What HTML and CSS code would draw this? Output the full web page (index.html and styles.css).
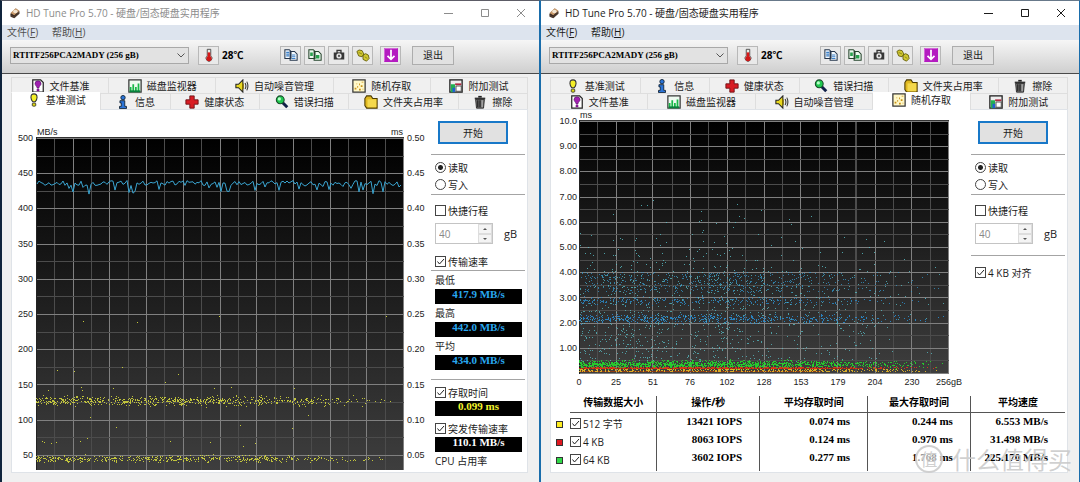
FILE: index.html
```html
<!DOCTYPE html>
<html lang="zh-CN">
<head>
<meta charset="utf-8">
<title>HD Tune Pro 5.70</title>
<link rel="stylesheet" href="styles.css">
</head>
<body>
<svg class="sprite" aria-hidden="true">
  <symbol id="i-disk" viewBox="0 0 16 16"><path d="M2 9 9 2l5 4-6 8-6-3z" fill="#3a2a20"/><path d="M2 8 9 1.500l5 3.500-7 6z" fill="#c99a6b"/><ellipse cx="8.500" cy="6" rx="3" ry="2.300" fill="#f3e4d0"/><path d="m2 10 5 2.500L14 6v3l-7 6-5-2z" fill="#4a372c"/></symbol>
  <symbol id="i-file" viewBox="0 0 16 16"><path d="M2 1h9l3 3v11H2z" fill="#fff" stroke="#222" stroke-width="1.400"/><path d="M4.500 5.500q0-3.500 3.500-3.500t3.500 3.500c0 2-2 2-2.500 5H7C7 8.500 5 8 4.500 5.500z" fill="#a020b0" stroke="#401050" stroke-width=".6"/><rect x="6.500" y="11.500" width="3" height="2.500" fill="#801090"/></symbol>
  <symbol id="i-monitor" viewBox="0 0 16 16"><rect x="1" y="1" width="14" height="14" fill="#eefaf0" stroke="#333" stroke-width="1.400"/><path d="M2 15V9h2v6zM5 15V6h2v9zM8 15V9h2v6zM11 15V5h2v10z" fill="#18b848"/><path d="M2 14h12" stroke="#08803c" stroke-width="2"/></symbol>
  <symbol id="i-sound" viewBox="0 0 16 16"><path d="M1 6h3l5-5v14l-5-5H1z" fill="#e8d820" stroke="#222" stroke-width="1.200"/><path d="M9 5v6" stroke="#806c00" stroke-width="2"/><path d="M11.500 4.500q2 3.500 0 7M13.500 3q2.500 5 0 10" fill="none" stroke="#333" stroke-width="1.200"/></symbol>
  <symbol id="i-random" viewBox="0 0 16 16"><rect x="1" y="1" width="14" height="14" fill="#fff8c8" stroke="#333" stroke-width="1.400"/><path d="M3 12h2v-2H3zM6 10h1V8H6zM5 6h1V5H5zM8 7h1V5H8zM10 9h2V7h-2zM11 4h2V3h-2zM8 13h2v-2H8zM12 12h1v-1h-1z" fill="#c89018"/></symbol>
  <symbol id="i-extra" viewBox="0 0 16 16"><rect x="1" y="1" width="14" height="14" fill="#eee" stroke="#222" stroke-width="1.500"/><path d="M2 6h5v9H2z" fill="#20b050"/><path d="M4 10h3v5H4z" fill="#2060d0"/><path d="M7 5h7v2H7z" fill="#b02840"/><path d="M8 8h6v6H8z" fill="#fff" stroke="#444"/></symbol>
  <symbol id="i-bench" viewBox="0 0 16 16"><path d="M4.500 5q0-4 3.500-4t3.500 4q0 2-2 5h-3q-2-3-2-5z" fill="#f4ee28" stroke="#333" stroke-width="1.200"/><rect x="6" y="11.500" width="4" height="3.500" rx="1" fill="#e0d810" stroke="#333"/></symbol>
  <symbol id="i-info" viewBox="0 0 16 16"><circle cx="8" cy="3" r="2.500" fill="#2a74d8" stroke="#123"/><path d="M4.500 6.500H10V13h2v2.500H4V13h2V9H4.500z" fill="#2a74d8" stroke="#123"/></symbol>
  <symbol id="i-health" viewBox="0 0 16 16"><path d="M5.500 1h5v4.500H15v5h-4.500V15h-5v-4.500H1v-5h4.500z" fill="#d81c24" stroke="#6a1014"/></symbol>
  <symbol id="i-scan" viewBox="0 0 16 16"><path d="m8 8 6 6" stroke="#102048" stroke-width="3.500"/><circle cx="6" cy="5.500" r="4.500" fill="#20c850" stroke="#174a28" stroke-width="1.200"/><circle cx="5" cy="4.500" r="1.800" fill="#b8ffc8"/></symbol>
  <symbol id="i-folder" viewBox="0 0 16 16"><path d="M1 4 3 1h5l2 3h5v11H3L1 12z" fill="#e0b820" stroke="#4a3a00" stroke-width="1.200"/><path d="M4 5h10v9H4z" fill="#f4d84c"/></symbol>
  <symbol id="i-erase" viewBox="0 0 16 16"><path d="M6 1h4v2H6z" fill="#222"/><path d="M2 3h12v2H2z" fill="#333"/><path d="M3 5h10l-1 10H4z" fill="#777" stroke="#222"/><path d="M5.500 6v8M8 6v8" stroke="#222" stroke-width="1.500"/><path d="M10.500 6v8" stroke="#bbb"/></symbol>
  <symbol id="i-temp" viewBox="0 0 16 16"><path d="M6 1.500h4V9a3.400 3.400 0 1 1-4 0z" fill="#e8ece8" stroke="#444"/><path d="M6.500 5h3v5h-3z" fill="#d81818"/><circle cx="8" cy="12" r="3" fill="#d01818"/></symbol>
  <symbol id="i-copy" viewBox="0 0 16 16"><path d="M1 2h5l2 2v8H1zM7 4h5l3 3v7H7z" fill="#f4faff" stroke="#26364c" stroke-width="1.200"/><path d="M2.500 5H6M2.500 7H6M2.500 9H6M9 8h4M9 10h4M9 12h4" stroke="#3c80c8" stroke-width="1.200"/></symbol>
  <symbol id="i-copypic" viewBox="0 0 16 16"><path d="M1 2h5l2 2v8H1zM7 4h5l3 3v7H7z" fill="#effaf0" stroke="#24442c" stroke-width="1.200"/><path d="M2.500 5h3v4h-3zM9 8h4v4H9z" fill="#28a04c"/></symbol>
  <symbol id="i-camera" viewBox="0 0 16 16"><path d="M5 2h6v3h3v8H2V5h3z" fill="#363636"/><path d="M6.500 3.500h3V5h-3z" fill="#ddd"/><circle cx="8" cy="9" r="3" fill="#e4e4e4"/><circle cx="8" cy="9" r="1.300" fill="#555"/></symbol>
  <symbol id="i-save" viewBox="0 0 16 16"><path d="M1 4q2-3 6-1l2 4-2 3-4-1zM8 8q3-3 6 0l1 4-3 3-4-2z" fill="#d0c830" stroke="#625c10"/><path d="m3 5 4 2m3 3 3 2" stroke="#8a8218"/></symbol>
  <symbol id="i-down" viewBox="0 0 16 16"><rect width="16" height="16" fill="#b41cc0"/><path d="M.5 15.500V.5h15" fill="none" stroke="#d878dc"/><path d="M8 2v11M4 9l4 4 4-4" fill="none" stroke="#fff" stroke-width="2"/></symbol>
  <symbol id="i-min" viewBox="0 0 10 10"><path d="M0 5.500h9" stroke="currentColor"/></symbol>
  <symbol id="i-max" viewBox="0 0 10 10"><path d="M1.500 1.500h7v7h-7z" fill="none" stroke="currentColor"/></symbol>
  <symbol id="i-close" viewBox="0 0 10 10"><path d="m1 1 8 8M9 1 1 9" fill="none" stroke="currentColor"/></symbol>
</svg>

<main class="desktop">
  <section class="window inactive">
    <header class="titlebar">
      <svg class="icon"><use href="#i-disk"/></svg>
      <h1 class="title">HD Tune Pro 5.70 - 硬盘/固态硬盘实用程序</h1>
      <button class="ctl" aria-label="最小化"><svg><use href="#i-min"/></svg></button>
      <button class="ctl" aria-label="最大化"><svg><use href="#i-max"/></svg></button>
      <button class="ctl" aria-label="关闭"><svg><use href="#i-close"/></svg></button>
    </header>
    <nav class="menubar"><button>文件(<u>F</u>)</button><button>帮助(<u>H</u>)</button></nav>
    <div class="toolbar">
      <select class="drive" aria-label="硬盘"><option>RTITF256PCA2MADY (256 gB)</option></select>
      <button class="tool" aria-label="温度"><svg class="icon"><use href="#i-temp"/></svg></button>
      <span class="temp">28℃</span>
      <div class="tools">
        <button class="tool" aria-label="复制文本"><svg class="icon"><use href="#i-copy"/></svg></button>
        <button class="tool" aria-label="复制图像"><svg class="icon"><use href="#i-copypic"/></svg></button>
        <button class="tool" aria-label="截图"><svg class="icon"><use href="#i-camera"/></svg></button>
        <button class="tool" aria-label="选项"><svg class="icon"><use href="#i-save"/></svg></button>
        <button class="tool last" aria-label="保存"><svg class="icon"><use href="#i-down"/></svg></button>
        <button class="exit">退出</button>
      </div>
    </div>
    <div class="client">
      <div class="tabs">
        <div class="tabrow">
          <button class="tab"><svg class="icon"><use href="#i-file"/></svg>文件基准</button>
          <button class="tab"><svg class="icon"><use href="#i-monitor"/></svg>磁盘监视器</button>
          <button class="tab"><svg class="icon"><use href="#i-sound"/></svg>自动噪音管理</button>
          <button class="tab"><svg class="icon"><use href="#i-random"/></svg>随机存取</button>
          <button class="tab"><svg class="icon"><use href="#i-extra"/></svg>附加测试</button>
        </div>
        <div class="tabrow">
          <button class="tab active"><svg class="icon"><use href="#i-bench"/></svg>基准测试</button>
          <button class="tab"><svg class="icon"><use href="#i-info"/></svg>信息</button>
          <button class="tab"><svg class="icon"><use href="#i-health"/></svg>健康状态</button>
          <button class="tab"><svg class="icon"><use href="#i-scan"/></svg>错误扫描</button>
          <button class="tab"><svg class="icon"><use href="#i-folder"/></svg>文件夹占用率</button>
          <button class="tab"><svg class="icon"><use href="#i-erase"/></svg>擦除</button>
        </div>
      </div>
      <div class="page">
        <div class="bench">
          <div class="units"><span>MB/s</span><span>ms</span></div>
          <div class="axis left"><span>500</span><span>450</span><span>400</span><span>350</span><span>300</span><span>250</span><span>200</span><span>150</span><span>100</span><span>50</span></div>
          <svg class="plot" id="bench-plot" viewBox="0 0 368 333" preserveAspectRatio="none" role="img" aria-label="传输速率"></svg>
          <div class="axis right"><span>0.50</span><span>0.45</span><span>0.40</span><span>0.35</span><span>0.30</span><span>0.25</span><span>0.20</span><span>0.15</span><span>0.10</span><span>0.05</span></div>
        </div>
        <aside class="panel">
          <button class="start">开始</button>
          <div class="group radios">
            <label class="row"><input type="radio" name="mode-a" checked>读取</label>
            <label class="row"><input type="radio" name="mode-a">写入</label>
          </div>
          <div class="group stroke">
            <label class="row"><input type="checkbox">快捷行程</label>
            <div class="spinrow"><div class="spin"><input type="text" value="40" aria-label="行程" disabled><button class="up" aria-label="增加" disabled></button><button class="down" aria-label="减少" disabled></button></div>gB</div>
            <label class="row rate"><input type="checkbox" checked>传输速率</label>
          </div>
          <div class="group speeds">
            <div class="cap">最低</div><output class="led blue">417.9 MB/s</output>
            <div class="cap">最高</div><output class="led blue">442.0 MB/s</output>
            <div class="cap">平均</div><output class="led blue">434.0 MB/s</output>
          </div>
          <div class="group access">
            <label class="row"><input type="checkbox" checked>存取时间</label><output class="led yellow">0.099 ms</output>
            <label class="row"><input type="checkbox" checked>突发传输速率</label><output class="led white">110.1 MB/s</output>
            <div class="cap">CPU 占用率</div>
          </div>
        </aside>
      </div>
    </div>
  </section>

  <section class="window">
    <header class="titlebar">
      <svg class="icon"><use href="#i-disk"/></svg>
      <h1 class="title">HD Tune Pro 5.70 - 硬盘/固态硬盘实用程序</h1>
      <button class="ctl" aria-label="最小化"><svg><use href="#i-min"/></svg></button>
      <button class="ctl" aria-label="最大化"><svg><use href="#i-max"/></svg></button>
      <button class="ctl" aria-label="关闭"><svg><use href="#i-close"/></svg></button>
    </header>
    <nav class="menubar"><button>文件(<u>F</u>)</button><button>帮助(<u>H</u>)</button></nav>
    <div class="toolbar">
      <select class="drive" aria-label="硬盘"><option>RTITF256PCA2MADY (256 gB)</option></select>
      <button class="tool" aria-label="温度"><svg class="icon"><use href="#i-temp"/></svg></button>
      <span class="temp">28℃</span>
      <div class="tools">
        <button class="tool" aria-label="复制文本"><svg class="icon"><use href="#i-copy"/></svg></button>
        <button class="tool" aria-label="复制图像"><svg class="icon"><use href="#i-copypic"/></svg></button>
        <button class="tool" aria-label="截图"><svg class="icon"><use href="#i-camera"/></svg></button>
        <button class="tool" aria-label="选项"><svg class="icon"><use href="#i-save"/></svg></button>
        <button class="tool last" aria-label="保存"><svg class="icon"><use href="#i-down"/></svg></button>
        <button class="exit">退出</button>
      </div>
    </div>
    <div class="client">
      <div class="tabs">
        <div class="tabrow">
          <button class="tab"><svg class="icon"><use href="#i-bench"/></svg>基准测试</button>
          <button class="tab"><svg class="icon"><use href="#i-info"/></svg>信息</button>
          <button class="tab"><svg class="icon"><use href="#i-health"/></svg>健康状态</button>
          <button class="tab"><svg class="icon"><use href="#i-scan"/></svg>错误扫描</button>
          <button class="tab"><svg class="icon"><use href="#i-folder"/></svg>文件夹占用率</button>
          <button class="tab"><svg class="icon"><use href="#i-erase"/></svg>擦除</button>
        </div>
        <div class="tabrow">
          <button class="tab"><svg class="icon"><use href="#i-file"/></svg>文件基准</button>
          <button class="tab"><svg class="icon"><use href="#i-monitor"/></svg>磁盘监视器</button>
          <button class="tab"><svg class="icon"><use href="#i-sound"/></svg>自动噪音管理</button>
          <button class="tab active"><svg class="icon"><use href="#i-random"/></svg>随机存取</button>
          <button class="tab"><svg class="icon"><use href="#i-extra"/></svg>附加测试</button>
        </div>
      </div>
      <div class="page stacked">
        <div class="upper">
          <div class="random">
            <div class="units"><span>ms</span></div>
            <div class="axis left"><span>10.0</span><span>9.00</span><span>8.00</span><span>7.00</span><span>6.00</span><span>5.00</span><span>4.00</span><span>3.00</span><span>2.00</span><span>1.00</span></div>
            <svg class="plot" id="random-plot" viewBox="0 0 368 254" preserveAspectRatio="none" role="img" aria-label="随机存取时间"></svg>
            <div class="xaxis"><span>0</span><span>25</span><span>51</span><span>76</span><span>102</span><span>128</span><span>153</span><span>179</span><span>204</span><span>230</span><span>256gB</span></div>
          </div>
          <aside class="panel">
            <button class="start">开始</button>
            <div class="group radios">
              <label class="row"><input type="radio" name="mode-b" checked>读取</label>
              <label class="row"><input type="radio" name="mode-b">写入</label>
            </div>
            <div class="group stroke">
              <label class="row"><input type="checkbox">快捷行程</label>
              <div class="spinrow"><div class="spin"><input type="text" value="40" aria-label="行程" disabled><button class="up" aria-label="增加" disabled></button><button class="down" aria-label="减少" disabled></button></div>gB</div>
            </div>
            <div class="group align"><label class="row"><input type="checkbox" checked>4 KB 对齐</label></div>
          </aside>
        </div>
        <table class="results">
          <colgroup><col class="c-key"><col class="c-size"><col class="c-ops"><col class="c-avg"><col class="c-max"><col class="c-speed"></colgroup>
          <thead><tr><td></td><th>传输数据大小</th><th>操作/秒</th><th>平均存取时间</th><th>最大存取时间</th><th>平均速度</th></tr></thead>
          <tbody>
            <tr><td><i class="key yellow"></i></td><td><label class="row"><input type="checkbox" checked>512 字节</label></td><td>13421 IOPS</td><td>0.074 ms</td><td>0.244 ms</td><td>6.553 MB/s</td></tr>
            <tr><td><i class="key red"></i></td><td><label class="row"><input type="checkbox" checked>4 KB</label></td><td>8063 IOPS</td><td>0.124 ms</td><td>0.970 ms</td><td>31.498 MB/s</td></tr>
            <tr><td><i class="key green"></i></td><td><label class="row"><input type="checkbox" checked>64 KB</label></td><td>3602 IOPS</td><td>0.277 ms</td><td>1.768 ms</td><td>225.170 MB/s</td></tr>
          </tbody>
        </table>
      </div>
    </div>
  </section>
  <div class="watermark"><span class="seal">值</span>什么值得买</div>
</main>
<script src="charts.js"></script>
</body>
</html>
```

FILE: styles.css
```css
* { box-sizing: border-box; }
body {
  margin: 0;
  background: #f0f0f0;
  color: #1c1c1c;
  font: 10px/14px "Open Sans", "Noto Sans CJK SC", sans-serif;
}
button, input, select { font: inherit; color: inherit; margin: 0; }
button { padding: 0; }
.sprite { position: absolute; width: 0; height: 0; }
.icon { width: 14px; height: 14px; flex: none; }

.desktop {
  position: relative;
  display: grid;
  grid-template-columns: 1fr 1fr;
  min-height: 100vh;
}
.window {
  display: flex;
  flex-direction: column;
  background: #f0f0f0;
  border: 1px solid #1a6dab;
  border-top-color: #68798a;
  min-width: 0;
}
.window.inactive { border-left: 2px solid #10243c; border-top-color: #5c5c66; border-bottom-color: #365878; }

.titlebar { display: flex; align-items: center; height: 24px; padding: 0 13px 0 7px; background: #fff; }
.titlebar .icon { width: 12px; height: 12px; }
.title { flex: 1; margin: 0 0 0 5px; font-size: 10px; font-weight: 400; white-space: nowrap; }
.ctl { width: 36px; height: 20px; border: 0; background: none; display: grid; place-items: center end; }
.ctl svg { width: 10px; height: 10px; }
.inactive .titlebar { color: #8c8c8c; }

.menubar { display: flex; gap: 14px; height: 15px; padding: 0 5px; background: #dde4ee; }
.menubar button { border: 0; background: none; line-height: 15px; }
.inactive .menubar { color: #505050; }

.toolbar {
  display: flex;
  align-items: center;
  height: 34px;
  padding: 0 85px 3px 8px;
  background: linear-gradient(#f6f6f6, #cfcfcf);
  border-bottom: 1px solid #4a4a4a;
}
.drive {
  appearance: none;
  width: 179px;
  height: 17px;
  padding: 0 2px;
  border: 1px solid #a8a8a8;
  border-radius: 0;
  background: #e2e2e2 url("data:image/svg+xml,%3Csvg xmlns='http://www.w3.org/2000/svg' width='8' height='5'%3E%3Cpath d='m.5.5 3.500 3.500L7.500.5' fill='none' stroke='%23555'/%3E%3C/svg%3E") no-repeat right 3px center;
  color: #000;
  font: bold 9px/15px "Liberation Serif", serif;
}
.tool { display: grid; place-items: center; width: 21px; height: 19px; border: 1px solid #b8b8b8; background: #e9e9e9; }
.drive + .tool { margin-left: 9px; }
.temp { margin-left: 3px; color: #000; font-weight: 700; }
.tools { display: flex; gap: 3px; margin-left: auto; }
.tools .last { margin-left: 4px; }
.exit { width: 42px; height: 19px; margin-left: 8px; border: 1px solid #adadad; background: #e1e1e1; }

.client { flex: 1; display: flex; flex-direction: column; padding: 3px 11px 9px 9px; }
.tabrow { display: flex; height: 16px; }
.tab {
  flex: 1 1 auto;
  display: flex;
  align-items: center;
  justify-content: center;
  gap: 5px;
  border: 0;
  border-top: 1px solid #dedede;
  border-right: 1px solid #dedede;
  background: #f0f0f0;
  line-height: 14px;
}
.tab:first-child { border-left: 1px solid #dedede; }
.tab.active { background: #fff; border-top-color: #fff; margin: -1px 0; padding-bottom: 3px; z-index: 1; }

.page {
  flex: 1;
  display: flex;
  background: #fff;
  border: 1px solid #dfe3e8;
  padding-right: 2px;
}
.page.stacked { flex-direction: column; }
.upper { display: flex; }
.bench { flex: 1; display: grid; grid-template: 27px 1fr / 24px 1fr 27px; padding-bottom: 2px; }
.units, .axis, .xaxis { font: 9px/10px "Liberation Sans", Arial, sans-serif; }
.units { grid-column: 2; display: flex; justify-content: space-between; align-items: flex-end; padding: 0 1px; }
.axis { display: flex; flex-direction: column; justify-content: space-between; }
.axis.left { grid-column: 1; text-align: right; padding-right: 3px; }
.axis.right { padding-left: 3px; }
.bench .axis { height: 327px; margin-top: -4px; }
.plot { display: block; width: 100%; height: 100%; min-height: 0; }
.bench .plot { height: 333px; }

.random { flex: 1; display: grid; grid-template: 10px 254px 13px / 28px 1fr; margin-right: 22px; }
.random .axis { height: 237px; margin-top: -4px; padding-right: 2px; }
.xaxis { grid-column: 2; display: flex; justify-content: space-between; padding-top: 3px; }
.xaxis span { width: 0; display: flex; justify-content: center; }

.panel { width: 94px; padding-top: 11px; flex: none; }
.start { display: block; width: 70px; height: 23px; margin: 0 0 10px 7px; border: 2px solid #1878c8; background: #e1e1e1; }
.group { border-top: 1px solid #a4a4a4; padding-left: 4px; }
.radios { padding-top: 4px; height: 40px; }
.row { display: flex; align-items: center; height: 17px; gap: 2px; white-space: nowrap; }
.row input {
  appearance: none;
  flex: none;
  width: 11px;
  height: 11px;
  border: 1px solid #444;
  background: #fff;
}
.row input[type="radio"] { border-radius: 50%; }
.row input[type="radio"]:checked { background: radial-gradient(circle, #222 0 2px, #fff 3px); }
.row input[type="checkbox"]:checked {
  background: url("data:image/svg+xml,%3Csvg xmlns='http://www.w3.org/2000/svg' width='9' height='9'%3E%3Cpath d='m1.500 4.500 2 2.500L8 2' fill='none' stroke='%23222'/%3E%3C/svg%3E") center no-repeat;
}
.stroke { padding-top: 7px; }
.spinrow { display: flex; align-items: center; gap: 11px; margin-top: 4px; font-size: 11px; }
.spin { display: grid; grid-template: 10px 9px / 1fr 14px; width: 58px; border: 1px solid #c4c4c4; }
.spin input { grid-row: 1 / 3; width: 100%; min-width: 0; padding: 0 3px; border: 0; background: #fff; color: #888; font-size: 10px; }
.spin button { display: grid; place-items: center; border: 1px solid #ddd; background: #f4f4f4; }
.spin button::before { content: ""; border: 2px solid transparent; }
.spin .up::before { border-top: 0; border-bottom-color: #555; }
.spin .down::before { border-bottom: 0; border-top-color: #555; }
.rate { margin-top: 9px; }
.cap { height: 18px; line-height: 18px; }
.led {
  display: block;
  width: 87px;
  height: 15px;
  background: #000;
  text-align: center;
  font: bold 11px/11px "Liberation Serif", serif;
}
.led.blue { color: #28a8f0; }
.led.yellow { color: #f4f42c; }
.led.white { color: #fff; }
.speeds { height: 109px; }
.access .row { height: 21px; padding-top: 4px; }
.align { margin-top: 11px; padding-top: 8px; }

.results { width: 100%; margin: 9px 0 0; table-layout: fixed; border-collapse: separate; border-spacing: 0; }
.c-key { width: 19px; }
.c-size { width: 17%; }
.c-ops { width: 20%; }
.c-avg { width: 21%; }
.c-max { width: 20%; }
.results th, .results td { padding: 0; vertical-align: top; }
.results th { height: 17px; line-height: 12px; color: #000; border-bottom: 1px solid #555; border-right: 1px solid #555; }
.results tbody td { height: 18px; padding-right: 17px; border-right: 1px solid #555; text-align: right; color: #000; font: bold 11px/17px "Liberation Serif", serif; }
.results tr > :last-child { border-right: 0; }
.results tr > :first-child, .results thead td { border-right: 0; padding: 0; }
.results tbody td:nth-child(2) { padding: 3px 0 0; }
.results tbody tr:last-child td { height: 22px; }
.results .row { height: 15px; color: #1c1c1c; font: 10px/14px "Open Sans", "Noto Sans CJK SC", sans-serif; }
.key { display: block; width: 7px; height: 7px; margin: 8px 0 0 5px; border: 1px solid #333; }
.key.yellow { background: #ffee20; }
.key.red { background: #e01820; }
.key.green { background: #30d848; }

.watermark {
  position: absolute;
  right: 8px;
  bottom: 9px;
  display: flex;
  align-items: center;
  gap: 9px;
  color: rgba(200, 200, 200, .85);
  font: 24px/30px "Noto Sans CJK SC", sans-serif;
}
.seal { display: grid; place-items: center; width: 28px; height: 28px; border: 2px solid; border-radius: 50%; background: rgba(255, 255, 255, .6); font-size: 17px; line-height: 20px; }
```

FILE: charts.js
```js
let seed = 20;
function rnd() {
  seed = (seed * 1664525 + 1013904223) % 4294967296;
  return seed / 4294967296;
}
function spread(width, knee) {
  for (;;) {
    const u = rnd();
    if (u < knee || rnd() < 0.85 * (1 - u) / (1 - knee)) return u * width;
  }
}
const rect = (x, y, w, h, fill) => `<rect x="${x}" y="${y}" width="${w}" height="${h}" fill="${fill}"/>`;

function grid(height, stepY) {
  let s = '<defs><linearGradient id="g' + height + '" x2="0" y2="1"><stop offset="0" stop-color="#000"/><stop offset="1" stop-color="#3e3e3e"/></linearGradient></defs>';
  s += rect(0, 0, 368, height, `url(#g${height})`);
  for (let i = 0; i <= 20; i++) s += rect(Math.min(367, Math.round(i * 18.35)), 0, 1, height, i % 2 ? '#4c4c4c' : '#808080');
  for (let i = 0; 1 + i * stepY < height; i++) s += rect(0, Math.round(1 + i * stepY), 368, 1, i % 2 ? '#4c4c4c' : '#808080');
  return s + rect(0, 0, 368, 1, '#333') + rect(0, 0, 1, height, '#222');
}
function dots(list, color, opacity) {
  const d = list.map(([x, y]) => `M${Math.floor(x)} ${Math.floor(y)}h1v1h-1z`).join('');
  return `<path d="${d}" fill="${color}" opacity="${opacity}"/>`;
}
function cloud(n, knee, y) {
  return Array.from({ length: n }, () => [spread(367, knee), y()]);
}
const bell = () => (rnd() + rnd() + rnd()) / 1.5 - 1;

function drawBench() {
  let s = grid(333, 17.6);
  let line = 'M1 47';
  for (let x = 3; x < 367; x += 2) {
    const dip = rnd() < 0.15 ? 4 + rnd() * 6 : 0;
    line += `L${x} ${(43.5 + rnd() * 5 + dip).toFixed(1)}`;
  }
  s += `<path d="${line}" fill="none" stroke="#3aa4d0" shape-rendering="auto"/>`;
  s += dots(cloud(680, 0.5, () => 264 + bell() * 7), '#d8dc3c', 0.85);
  s += dots(cloud(500, 0.6, () => 322 + bell() * 5), '#d8dc3c', 0.85);
  s += dots([[47, 184], [101, 185], [183, 179], [350, 179], [21, 233], [38, 234], [86, 230], [129, 245], [142, 237],
    [12, 253], [45, 250], [46, 253], [77, 251], [178, 251], [195, 250], [258, 251], [54, 280], [80, 290], [204, 288],
    [256, 291], [272, 278], [6, 304], [8, 305], [15, 306], [20, 305], [44, 304], [51, 301], [134, 304], [174, 305], [207, 309], [219, 306]], '#d8dc3c', 0.9);
  document.getElementById('bench-plot').innerHTML = s;
}

function drawRandom() {
  const at = v => 253 - v * 25.2;
  let s = grid(254, 12.6);
  s += dots(cloud(520, 0.45, () => at(2.15 + bell() * 0.24)), '#2890d8', 0.85);
  s += dots(cloud(280, 0.5, () => at(2.85 + bell() * 0.25)), '#2c88c4', 0.85);
  s += dots(cloud(500, 0.5, () => at(3.2 + rnd() * 0.8)), '#3498cc', 0.75);
  s += dots(cloud(850, 0.45, () => at(0.4 + rnd() * 3.5)), '#58c0c8', 0.75);
  s += dots(cloud(150, 0.5, () => at(4 + rnd() * rnd() * 3)), '#58c0c8', 0.8);
  s += dots(cloud(1500, 0.5, () => at(0.33 + bell() * 0.22)), '#24d82c', 0.9);
  s += rect(1, 248, 280, 1, '#9c2c14') + rect(1, 251, 240, 1, '#8c3c14');
  s += dots(cloud(500, 0.6, () => 247 + rnd() * 2), '#e03418', 0.9);
  s += dots(cloud(420, 0.7, () => 249 + rnd() * 3), '#e8b828', 0.9);
  document.getElementById('random-plot').innerHTML = s;
}
for (const id of ['bench-plot', 'random-plot']) document.getElementById(id).setAttribute('shape-rendering', 'crispEdges');
drawBench();
drawRandom();
```
